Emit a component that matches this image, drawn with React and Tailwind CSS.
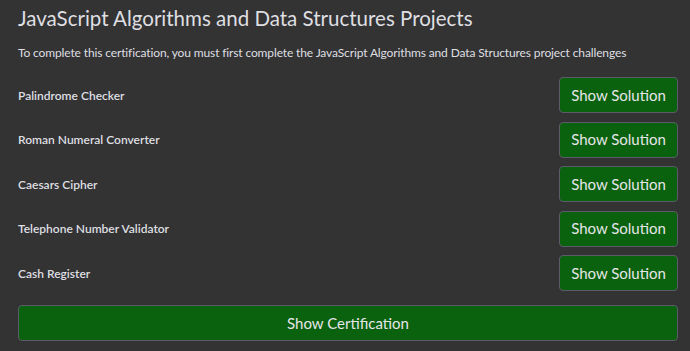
export default function App() {
  const projects = [
    "Palindrome Checker",
    "Roman Numeral Converter",
    "Caesars Cipher",
    "Telephone Number Validator",
    "Cash Register",
  ];
  return (
    <div
      className="w-[690px] h-[351px] bg-[#333333] text-[#dfdfe2] pl-[18px] pr-[12px] overflow-hidden"
      style={{ fontFamily: "Lato, 'Noto Sans', sans-serif" }}
    >
      <h1 className="text-[20.5px] leading-[36px] font-normal">
        JavaScript Algorithms and Data Structures Projects
      </h1>
      <p className="text-[12px] leading-[18px] mt-[8px] whitespace-nowrap tracking-[-0.13px]">
        To complete this certification, you must first complete the JavaScript Algorithms and Data Structures project challenges
      </p>
      <div className="flex flex-col gap-[8.5px] mt-[15px]">
        {projects.map((p) => (
          <div key={p} className="flex items-center justify-between h-[36px]">
            <span className="text-[12px] font-semibold pt-[1px]">{p}</span>
            <button className="w-[119px] h-[36px] bg-[#0a610e] border border-[#5b5b6a] rounded-[4px] text-[15px] text-[#e6e6e8]">
              Show Solution
            </button>
          </div>
        ))}
      </div>
      <button className="mt-[14px] w-full h-[36px] bg-[#0a610e] border border-[#5b5b6a] rounded-[4px] text-[15px] text-[#e6e6e8]">
        Show Certification
      </button>
    </div>
  );
}
